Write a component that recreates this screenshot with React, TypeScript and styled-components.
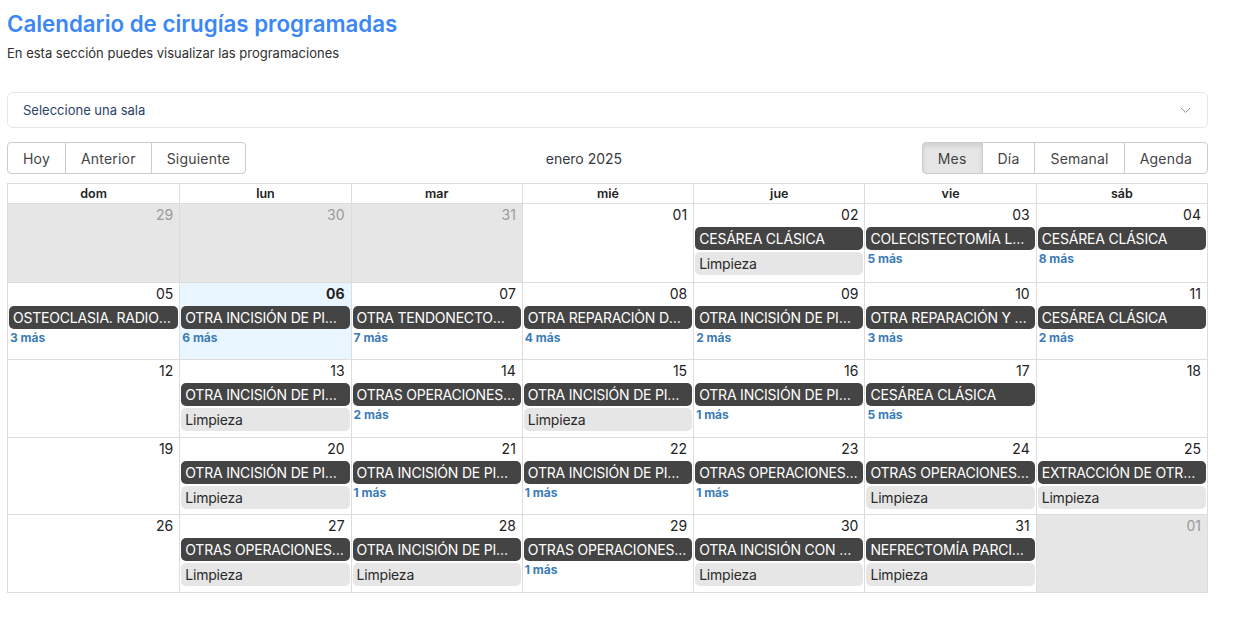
import React from "react";
import styled, { createGlobalStyle } from "styled-components";

const Global = createGlobalStyle`
  html, body { margin: 0; padding: 0; background: #fff; }
  body { font-family: Inter, "Noto Sans", "DejaVu Sans", sans-serif; color: #373a3c; }
  * { box-sizing: border-box; }
`;

const Page = styled.div`
  padding: 9px 28px 0 7px;
  width: 1236px;
`;

const Title = styled.h1`
  margin: 0;
  font-size: 22.3px;
  line-height: 30px;
  font-weight: 600;
  color: #3c87f6;
`;

const Subtitle = styled.p`
  margin: 6px 0 0;
  font-size: 13px;
  line-height: 17px;
  color: #2f2f2f;
`;

const SelectBox = styled.div`
  margin-top: 30px;
  height: 36px;
  border: 1px solid #e6e6e6;
  border-radius: 6px;
  display: flex;
  align-items: center;
  justify-content: space-between;
  padding: 0 16px 0 15px;
  font-size: 13px;
  color: #2b4468;
`;

const Toolbar = styled.div`
  margin-top: 14px;
  display: flex;
  align-items: center;
  justify-content: space-between;
  height: 32px;
`;

const BtnGroup = styled.div`
  display: flex;
`;

const Btn = styled.button<{ $active?: boolean }>`
  font-family: inherit;
  font-size: 14px;
  letter-spacing: 0.2px;
  color: #444;
  background: ${(p) => (p.$active ? "#e6e6e6" : "#fff")};
  box-shadow: ${(p) => (p.$active ? "inset 0 3px 5px rgba(0,0,0,0.1)" : "none")};
  border: 1px solid #ccc;
  height: 32px;
  padding: 0 15px;
  margin: 0 0 0 -1px;
  border-radius: 0;
  &:first-child { border-radius: 4px 0 0 4px; margin-left: 0; }
  &:last-child { border-radius: 0 4px 4px 0; }
`;

const Label = styled.span`
  font-size: 14px;
  color: #373a3c;
`;

const Month = styled.div`
  margin-top: 9px;
  border: 1px solid #ddd;
  display: flex;
  flex-direction: column;
`;

const HeaderRow = styled.div`
  display: grid;
  grid-template-columns: repeat(7, 1fr);
  border-bottom: 1px solid #ddd;
`;

const HeaderCell = styled.div`
  text-align: center;
  font-size: 12.5px;
  font-weight: 600;
  color: #222;
  height: 19px;
  line-height: 19px;
  & + & { border-left: 1px solid #ddd; }
`;

const Week = styled.div`
  display: grid;
  grid-template-columns: repeat(7, 1fr);
  height: 77.6px;
  & + & { border-top: 1px solid #ddd; }
`;

const Cell = styled.div<{ $off?: boolean; $today?: boolean }>`
  background: ${(p) => (p.$off ? "#e6e6e6" : p.$today ? "#eaf6ff" : "#fff")};
  padding: 0 1px;
  display: flex;
  flex-direction: column;
  min-width: 0;
  overflow: hidden;
  & + & { border-left: 1px solid #ddd; }
`;

const DateNum = styled.div<{ $off?: boolean; $today?: boolean }>`
  text-align: right;
  padding-right: 5px;
  font-size: 14px;
  line-height: 18px;
  margin-top: 2px;
  margin-bottom: 3px;
  color: ${(p) => (p.$off ? "#9a9a9a" : "#222")};
  font-weight: ${(p) => (p.$today ? 700 : 400)};
`;

const Event = styled.div<{ $light?: boolean }>`
  background: ${(p) => (p.$light ? "#e6e6e6" : "#444444")};
  color: ${(p) => (p.$light ? "#2a2a2a" : "#fff")};
  border-radius: 5px;
  height: 23px;
  line-height: 23px;
  padding: 0 5px 0 4px;
  font-size: 14px;
  letter-spacing: -0.2px;
  white-space: nowrap;
  overflow: hidden;
  text-overflow: ellipsis;
  margin-bottom: 2px;
`;

const More = styled.a`
  font-size: 12px;
  font-weight: 700;
  color: #3a7bb8;
  line-height: 16px;
  padding-left: 1px;
  margin-top: -1px;
`;

type Ev = { t: string; more?: number; limpieza?: boolean };
type Day = { d: string; off?: boolean; today?: boolean; ev?: Ev };

const L = (t: string): Ev => ({ t, limpieza: true });
const M = (t: string, more: number): Ev => ({ t, more });

const weeks: Day[][] = [
  [
    { d: "29", off: true },
    { d: "30", off: true },
    { d: "31", off: true },
    { d: "01" },
    { d: "02", ev: L("CESÁREA CLÁSICA") },
    { d: "03", ev: M("COLECISTECTOMÍA LAPAROSCÓPICA", 5) },
    { d: "04", ev: M("CESÁREA CLÁSICA", 8) },
  ],
  [
    { d: "05", ev: M("OSTEOCLASIA. RADIO Y CUBITO", 3) },
    { d: "06", today: true, ev: M("OTRA INCISIÓN DE PIEL Y TEJIDO", 6) },
    { d: "07", ev: M("OTRA TENDONECTOMÍA", 7) },
    { d: "08", ev: M("OTRA REPARACIÒN DE HERNIA", 4) },
    { d: "09", ev: M("OTRA INCISIÓN DE PIEL Y TEJIDO", 2) },
    { d: "10", ev: M("OTRA REPARACIÓN Y PLASTIA", 3) },
    { d: "11", ev: M("CESÁREA CLÁSICA", 2) },
  ],
  [
    { d: "12" },
    { d: "13", ev: L("OTRA INCISIÓN DE PIEL Y TEJIDO") },
    { d: "14", ev: M("OTRAS OPERACIONES SOBRE", 2) },
    { d: "15", ev: L("OTRA INCISIÓN DE PIEL Y TEJIDO") },
    { d: "16", ev: M("OTRA INCISIÓN DE PIEL Y TEJIDO", 1) },
    { d: "17", ev: M("CESÁREA CLÁSICA", 5) },
    { d: "18" },
  ],
  [
    { d: "19" },
    { d: "20", ev: L("OTRA INCISIÓN DE PIEL Y TEJIDO") },
    { d: "21", ev: M("OTRA INCISIÓN DE PIEL Y TEJIDO", 1) },
    { d: "22", ev: M("OTRA INCISIÓN DE PIEL Y TEJIDO", 1) },
    { d: "23", ev: M("OTRAS OPERACIONES SOBRE", 1) },
    { d: "24", ev: L("OTRAS OPERACIONES SOBRE") },
    { d: "25", ev: L("EXTRACCIÓN DE OTRO CUERPO") },
  ],
  [
    { d: "26" },
    { d: "27", ev: L("OTRAS OPERACIONES SOBRE") },
    { d: "28", ev: L("OTRA INCISIÓN DE PIEL Y TEJIDO") },
    { d: "29", ev: M("OTRAS OPERACIONES SOBRE", 1) },
    { d: "30", ev: L("OTRA INCISIÓN CON DRENAJE") },
    { d: "31", ev: L("NEFRECTOMÍA PARCIAL DERECHA") },
    { d: "01", off: true },
  ],
];

const days = ["dom", "lun", "mar", "mié", "jue", "vie", "sáb"];

const Chevron = () => (
  <svg width="11" height="7" viewBox="0 0 11 7" fill="none">
    <polyline points="1,1 5.5,5.5 10,1" stroke="#999" strokeWidth="1" />
  </svg>
);

export default function App() {
  return (
    <Page>
      <Global />
      <Title>Calendario de cirugías programadas</Title>
      <Subtitle>En esta sección puedes visualizar las programaciones</Subtitle>
      <SelectBox>
        <span>Seleccione una sala</span>
        <Chevron />
      </SelectBox>
      <Toolbar>
        <BtnGroup>
          <Btn>Hoy</Btn>
          <Btn>Anterior</Btn>
          <Btn>Siguiente</Btn>
        </BtnGroup>
        <Label>enero 2025</Label>
        <BtnGroup>
          <Btn $active>Mes</Btn>
          <Btn>Día</Btn>
          <Btn>Semanal</Btn>
          <Btn>Agenda</Btn>
        </BtnGroup>
      </Toolbar>
      <Month>
        <HeaderRow>
          {days.map((d) => (
            <HeaderCell key={d}>{d}</HeaderCell>
          ))}
        </HeaderRow>
        {weeks.map((w, wi) => (
          <Week key={wi}>
            {w.map((day, di) => (
              <Cell key={di} $off={day.off} $today={day.today}>
                <DateNum $off={day.off} $today={day.today}>
                  {day.d}
                </DateNum>
                {day.ev && <Event>{day.ev.t}</Event>}
                {day.ev?.limpieza && <Event $light>Limpieza</Event>}
                {day.ev?.more && <More>{day.ev.more} más</More>}
              </Cell>
            ))}
          </Week>
        ))}
      </Month>
    </Page>
  );
}
